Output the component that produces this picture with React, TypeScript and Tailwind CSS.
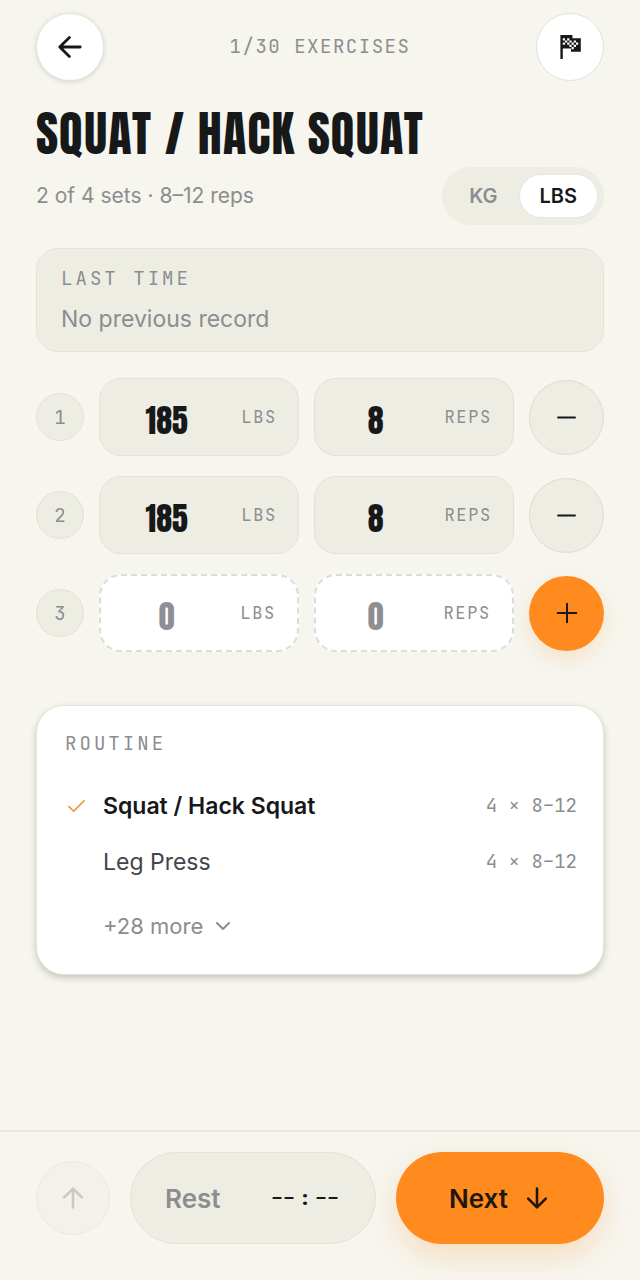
import {useState} from "react";
import {Check, ChevronDown, Minus, Plus} from "lucide-react";
import clsx from "clsx";

type SetRow = {
    weight: string;
    reps: string;
    done: boolean;
};

const SETS: SetRow[] = [
    {weight: '185', reps: '8', done: true},
    {weight: '185', reps: '8', done: true},
    {weight: '', reps: '', done: false},
];

const ROUTINE = [
    {name: 'Squat / Hack Squat', target: '4 × 8–12', current: true},
    {name: 'Leg Press', target: '4 × 8–12', current: false},
];

const UNITS = ['KG', 'LBS'];

const MONO = "font-['JetBrains_Mono','DejaVu_Sans_Mono',monospace]";
const DISPLAY = "font-['Anton','Liberation_Sans_Narrow','DejaVu_Sans_Condensed',sans-serif] font-normal";

// Points left; rotate it for the other directions.
const ArrowIcon = ({size, className}: {size: number; className?: string}) => (
    <svg
        width={size}
        height={size}
        viewBox="0 0 24 24"
        fill="none"
        stroke="currentColor"
        strokeWidth="2.8"
        strokeLinecap="round"
        strokeLinejoin="round"
        aria-hidden="true"
        className={className}
    >
        <path d="M1.8 12h20.4M11.4 2.4 1.8 12l9.6 9.6" />
    </svg>
);

const FlagIcon = () => (
    <svg width="24" height="28" viewBox="0 0 24 28" aria-hidden="true">
        <path d="M2.4 2h12v3.2h8.4v13.6h-9.8v-3.2H4.8V26H2.4z" fill="currentColor" />
        <path
            d="M4.8 5.2H7v2.2H4.8zM9.2 5.2h2.2v2.2H9.2zM7 7.4h2.2v2.2H7zM11.4 7.4h2.2v2.2h-2.2zM4.8 9.6H7v2.2H4.8zM9.2 9.6h2.2v2.2H9.2zM13.6 9.6h2.2v2.2h-2.2zM15.8 7.4H18v2.2h-2.2zM11.4 11.8h2.2V14h-2.2zM15.8 11.8H18V14h-2.2zM13.6 14h2.2v2.2h-2.2zM18 9.6h2.2v2.2H18z"
            fill="#fff"
        />
    </svg>
);

const SetField = ({label, unit, value, done}: {label: string; unit: string; value: string; done: boolean}) => (
    <label
        className={clsx(
            'flex h-[78px] min-w-0 flex-1 items-center gap-6 rounded-[22px] pt-0.5 pr-[21px] pl-4',
            done ? 'border border-[#e2e2d9] bg-[#edede4]' : 'border-2 border-dashed border-[#dcdcd8] bg-white',
        )}
    >
        <input
            type="text"
            inputMode="numeric"
            aria-label={label}
            defaultValue={value}
            placeholder="0"
            className={clsx(DISPLAY, 'w-full min-w-0 flex-1 bg-transparent pt-1.5 text-center text-[32px] text-[#17181a] outline-none placeholder:text-[#8e8f94]')}
        />
        <span className={clsx(MONO, 'text-[17px] tracking-[0.1em] text-[#8c8d8e]')}>{unit}</span>
    </label>
);

const App = () => {
    const [unit, setUnit] = useState('LBS');

    return (
        <div className="flex min-h-screen flex-col bg-[#f6f5ee] font-['Inter',sans-serif] text-[#17181a]">
            <main className="flex-1 px-9 pt-[13px]">
                {/* Top bar */}
                <header className="flex items-center justify-between">
                    <button
                        type="button"
                        aria-label="Back"
                        className="flex size-[68px] items-center justify-center rounded-full border border-[#e6e6df] bg-white shadow-[0_1px_5px_rgba(0,0,0,0.14)]"
                    >
                        <ArrowIcon size={24} />
                    </button>
                    <p className={clsx(MONO, 'text-[19px] tracking-[0.08em] text-[#8c8d8e]')}>1/30 EXERCISES</p>
                    <button
                        type="button"
                        aria-label="Finish workout"
                        className="flex size-[68px] items-center justify-center rounded-full border border-[#e2e2dc] bg-white"
                    >
                        <FlagIcon />
                    </button>
                </header>

                {/* Exercise title + unit toggle */}
                <h1 className={clsx(DISPLAY, 'mt-5 text-5xl leading-[66px] tracking-wide uppercase')}>Squat / Hack Squat</h1>
                <div className="flex items-center justify-between">
                    <p className="text-[21px] text-[#8c8d8e]">2 of 4 sets · 8–12 reps</p>
                    <div role="group" aria-label="Weight unit" className="flex h-[58px] items-center rounded-full bg-[#edede4] px-1.5">
                        {UNITS.map((u) => (
                            <button
                                key={u}
                                type="button"
                                aria-pressed={unit === u}
                                onClick={() => setUnit(u)}
                                className={clsx(
                                    'h-11 rounded-full border px-5 text-xl font-semibold',
                                    unit === u ? 'border-[#e6e6df] bg-white' : 'border-transparent text-[#8c8d8e]',
                                )}
                            >
                                {u}
                            </button>
                        ))}
                    </div>
                </div>

                {/* Last time */}
                <section className="mt-[23px] rounded-[22px] border border-[#e2e2d9] bg-[#edede4] px-6 pt-4 pb-3.5">
                    <h2 className={clsx(MONO, 'text-[19px] leading-7 tracking-[0.16em] text-[#8c8d8e]')}>LAST TIME</h2>
                    <p className="mt-2 text-[23px] leading-9 text-[#8c8d8e]">No previous record</p>
                </section>

                {/* Sets */}
                <ul className="mt-[26px] space-y-5">
                    {SETS.map((set, i) => (
                        <li key={i} className="flex items-center gap-[15px]">
                            <span className={clsx(MONO, 'flex size-12 shrink-0 items-center justify-center rounded-full border border-[#e2e2d9] bg-[#edede4] pt-0.5 text-[19px] text-[#8c8d8e]')}>
                                {i + 1}
                            </span>
                            <SetField label={`Set ${i + 1} weight`} unit={unit} value={set.weight} done={set.done} />
                            <SetField label={`Set ${i + 1} reps`} unit="REPS" value={set.reps} done={set.done} />
                            <button
                                type="button"
                                aria-label={set.done ? 'Remove set' : 'Add set'}
                                className={clsx(
                                    'flex size-[75px] shrink-0 items-center justify-center rounded-full',
                                    set.done
                                        ? 'border border-[#dcdcd4] bg-[#edede4]'
                                        : 'bg-[#ff8b1f] shadow-[0_8px_20px_rgba(255,139,31,0.16)]',
                                )}
                            >
                                {set.done ? <Minus size={29} strokeWidth={1.6} /> : <Plus size={32} strokeWidth={1.5} />}
                            </button>
                        </li>
                    ))}
                </ul>

                {/* Routine */}
                <section className="mt-[53px] mb-8 rounded-[28px] border border-[#e6e4dc] bg-white pt-6 pr-[26px] pb-5 pl-7 shadow-[0_3px_6px_rgba(60,60,40,0.25)]">
                    <h2 className={clsx(MONO, 'text-[19px] leading-7 tracking-[0.16em] text-[#8c8d8e]')}>ROUTINE</h2>
                    <ul className="mt-5">
                        {ROUTINE.map(({name, target, current}) => (
                            <li key={name} className="flex h-14 items-center">
                                <span className="w-[38px]">
                                    {current && <Check size={23} strokeWidth={1.7} className="text-[#ef8f2e]" />}
                                </span>
                                <span className={clsx('flex-1 text-[23px]', current ? 'font-semibold' : 'text-[#444549]')}>{name}</span>
                                <span className={clsx(MONO, 'text-[19px] text-[#8c8d8e]')}>{target}</span>
                            </li>
                        ))}
                    </ul>
                    <button type="button" className="mt-2 ml-[38px] flex h-14 items-center gap-2 text-[22px] text-[#8c8d8e]">
                        +28 more
                        <ChevronDown size={24} />
                    </button>
                </section>
            </main>

            {/* Bottom bar */}
            <footer className="flex items-center gap-5 border-t-2 border-[#e8e7df] px-9 pt-5 pb-9">
                <button
                    type="button"
                    disabled
                    aria-label="Previous exercise"
                    className="flex size-[74px] shrink-0 items-center justify-center rounded-full border border-[#ebeae2] bg-[#f3f2ea] text-[#c9c9c2]"
                >
                    <ArrowIcon size={22} className="rotate-90" />
                </button>
                <button
                    type="button"
                    className="flex h-[92px] flex-1 items-center justify-between rounded-full border border-[#e2e2d9] bg-[#edede4] pr-9 pl-[34px]"
                >
                    <span className="text-[26px] font-semibold text-[#8c8d8e]">Rest</span>
                    <span className={clsx(MONO, 'flex gap-1 text-[20px] font-medium')}>
                        <span>––</span>
                        <span className="font-extrabold">:</span>
                        <span>––</span>
                    </span>
                </button>
                <button
                    type="button"
                    className="flex h-[92px] items-center gap-[18px] rounded-full bg-[#ff8b1f] pr-14 pl-[53px] text-[26px] font-semibold text-[#21160a] shadow-[0_12px_28px_rgba(255,139,31,0.22)]"
                >
                    Next
                    <ArrowIcon size={22} className="-rotate-90" />
                </button>
            </footer>
        </div>
    );
};

export default App;
